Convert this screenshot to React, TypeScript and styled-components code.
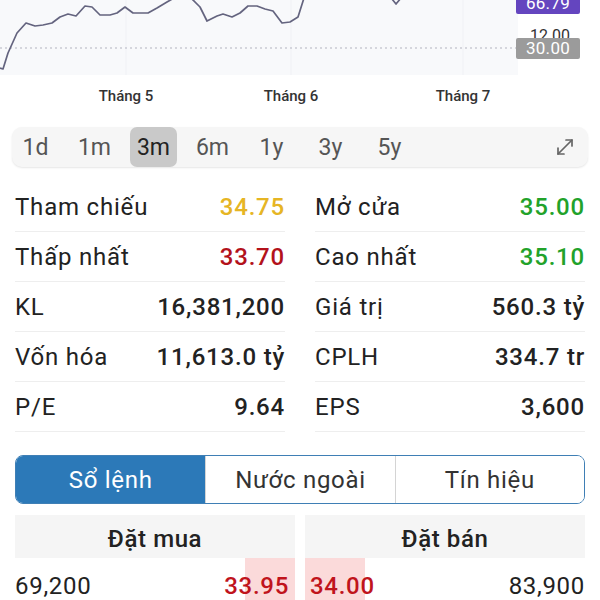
import * as React from 'react'
import styled, { createGlobalStyle } from 'styled-components'

const GlobalStyle = createGlobalStyle`
  body {
    margin: 0;
    background: #fff;
    font-family: Roboto, 'Noto Sans', sans-serif;
    color: #222;
  }
  * {
    box-sizing: border-box;
  }
`

const Page = styled.div`
  width: 600px;
  height: 600px;
  overflow: hidden;
  background: #fff;
`

const ChartArea = styled.div`
  display: flex;
  height: 75px;
`

const Plot = styled.div`
  width: 518px;
  background: #f8f9fb;
`

const PriceAxis = styled.div`
  position: relative;
  flex: 1;
`

const PriceTag = styled.span<{ $tone: 'purple' | 'gray' }>`
  position: absolute;
  left: -2px;
  width: 64px;
  height: 21px;
  border-radius: 2px;
  background: ${p => (p.$tone === 'purple' ? '#6445bf' : '#9b9b9b')};
  color: #fff;
  font-size: 17px;
  line-height: 21px;
  text-align: center;
  letter-spacing: 0.3px;
`

const AxisText = styled.span`
  position: absolute;
  left: 0;
  width: 64px;
  text-align: center;
  font-size: 16px;
  color: #333;
`

const MonthAxis = styled.div`
  position: relative;
  height: 45px;
`

const MonthLabel = styled.span`
  position: absolute;
  top: 12px;
  transform: translateX(-50%);
  font-size: 15px;
  font-weight: 500;
  color: #333;
`

const RangeBar = styled.div`
  display: flex;
  align-items: center;
  gap: 12px;
  height: 40px;
  margin: 7px 12px 0;
  border-radius: 10px;
  background: #f6f6f6;
  box-shadow: 0 1px 2px rgba(0, 0, 0, 0.1);
`

const RangeItem = styled.span<{ $active?: boolean }>`
  width: 47px;
  height: 40px;
  border-radius: 7px;
  display: flex;
  align-items: center;
  justify-content: center;
  font-size: 23px;
  color: ${p => (p.$active ? '#222' : '#555')};
  background: ${p => (p.$active ? '#c9c9c9' : 'transparent')};
`

const ExpandButton = styled.span`
  margin-left: auto;
  margin-right: 13px;
  display: flex;
`

const Stats = styled.div`
  display: grid;
  grid-template-columns: 1fr 1fr;
  column-gap: 30px;
  padding: 0 15px;
  margin-top: 15px;
`

const StatRow = styled.div`
  display: flex;
  align-items: center;
  justify-content: space-between;
  height: 50px;
  border-bottom: 1px solid #eeeeee;
  font-size: 24px;
  letter-spacing: 0.8px;
`

const StatLabel = styled.span`
  color: #222;
`

const StatValue = styled.span<{ $color?: string }>`
  font-weight: 500;
  color: ${p => p.$color || '#222'};
`

const Tabs = styled.div`
  display: grid;
  grid-template-columns: repeat(3, 1fr);
  height: 49px;
  margin: 23px 15px 0;
  border: 1.5px solid #3f7fb5;
  border-radius: 8px;
  overflow: hidden;
`

const Tab = styled.div<{ $active?: boolean }>`
  display: flex;
  align-items: center;
  justify-content: center;
  font-size: 24px;
  letter-spacing: 0.7px;
  color: ${p => (p.$active ? '#fff' : '#333')};
  background: ${p => (p.$active ? '#2c79b8' : '#fff')};
  & + & {
    border-left: 1px solid #d4d4d4;
  }
`

const Book = styled.div`
  display: grid;
  grid-template-columns: 1fr 1fr;
  column-gap: 10px;
  margin: 11px 15px 0;
`

const BookHead = styled.div`
  height: 43px;
  padding-top: 5px;
  display: flex;
  align-items: center;
  justify-content: center;
  background: #f5f5f5;
  font-size: 24px;
  font-weight: 500;
  letter-spacing: 0.6px;
`

const BookCell = styled.div<{ $bar: number; $side: 'left' | 'right' }>`
  position: relative;
  display: flex;
  align-items: center;
  justify-content: space-between;
  height: 56px;
  font-size: 24px;
  letter-spacing: 0.7px;
  &::before {
    content: '';
    position: absolute;
    top: 0;
    bottom: 0;
    ${p => p.$side}: 0;
    width: ${p => p.$bar}px;
    background: #fbdada;
  }
  & > span {
    position: relative;
  }
`

const Price = styled.span`
  color: #c0141c;
  font-weight: 500;
`

const Volume = styled.span`
  color: #222;
`

const linePoints = [
  [0, 68], [3, 69], [8, 53], [17, 33], [26, 23], [35, 26], [43, 25], [52, 23],
  [60, 17], [68, 14], [76, 16], [85, 6], [92, 7], [100, 15], [110, 15], [117, 13],
  [125, 7], [133, 13], [148, 13], [157, 8], [167, 2], [174, -2], [182, -6], [190, -3],
  [200, 7], [207, 21], [217, 16], [223, 14], [232, 17], [240, 13], [248, 6], [257, 6],
  [265, 9], [273, 11], [282, 23], [290, 22], [298, 17], [304, -2], [320, -20], [380, -15],
  [392, -1], [396, 4], [401, -2], [420, -20], [518, -30],
]

const Chart: React.FunctionComponent = () => (
  <ChartArea>
    <Plot>
      <svg width='518' height='75' viewBox='0 0 518 75'>
        {[126, 291, 463].map(x => (
          <line key={x} x1={x} y1='0' x2={x} y2='75' stroke='#f0f1f5' strokeWidth='1' />
        ))}
        <line x1='0' y1='48' x2='518' y2='48' stroke='#c9cad3' strokeWidth='1.5' strokeDasharray='2 3' />
        <polyline
          points={linePoints.map(p => p.join(',')).join(' ')}
          fill='none'
          stroke='#64647f'
          strokeWidth='1.7'
          strokeLinejoin='round'
        />
      </svg>
    </Plot>
    <PriceAxis>
      <PriceTag $tone='purple' style={{ top: -7 }}>66.79</PriceTag>
      <AxisText style={{ top: 26 }}>12.00</AxisText>
      <PriceTag $tone='gray' style={{ top: 38 }}>30.00</PriceTag>
    </PriceAxis>
  </ChartArea>
)

const ExpandIcon = () => (
  <svg width='20' height='20' viewBox='0 0 20 20' fill='none' stroke='#666' strokeWidth='1.7' strokeLinecap='round' strokeLinejoin='round'>
    <path d='M3 17 17 3' />
    <path d='M11 3h6v6' />
    <path d='M3 11v6h6' />
  </svg>
)

const stats: [string, string, string?][][] = [
  [['Tham chiếu', '34.75', '#e6b524'], ['Mở cửa', '35.00', '#22a22a']],
  [['Thấp nhất', '33.70', '#b3121b'], ['Cao nhất', '35.10', '#22a22a']],
  [['KL', '16,381,200'], ['Giá trị', '560.3 tỷ']],
  [['Vốn hóa', '11,613.0 tỷ'], ['CPLH', '334.7 tr']],
  [['P/E', '9.64'], ['EPS', '3,600']],
]

const ranges = ['1d', '1m', '3m', '6m', '1y', '3y', '5y']

const App: React.FunctionComponent = () => (
  <Page>
    <GlobalStyle />
    <Chart />
    <MonthAxis>
      <MonthLabel style={{ left: 126 }}>Tháng 5</MonthLabel>
      <MonthLabel style={{ left: 291 }}>Tháng 6</MonthLabel>
      <MonthLabel style={{ left: 463 }}>Tháng 7</MonthLabel>
    </MonthAxis>
    <RangeBar>
      {ranges.map(r => (
        <RangeItem key={r} $active={r === '3m'}>{r}</RangeItem>
      ))}
      <ExpandButton>
        <ExpandIcon />
      </ExpandButton>
    </RangeBar>
    <Stats>
      {stats.flat().map(([label, value, color]) => (
        <StatRow key={label}>
          <StatLabel>{label}</StatLabel>
          <StatValue $color={color}>{value}</StatValue>
        </StatRow>
      ))}
    </Stats>
    <Tabs>
      <Tab $active>Sổ lệnh</Tab>
      <Tab>Nước ngoài</Tab>
      <Tab>Tín hiệu</Tab>
    </Tabs>
    <Book>
      <BookHead>Đặt mua</BookHead>
      <BookHead>Đặt bán</BookHead>
      <BookCell $bar={50} $side='right'>
        <Volume>69,200</Volume>
        <Price style={{ marginRight: 6 }}>33.95</Price>
      </BookCell>
      <BookCell $bar={60} $side='left'>
        <Price style={{ marginLeft: 5 }}>34.00</Price>
        <Volume>83,900</Volume>
      </BookCell>
    </Book>
  </Page>
)

export default App
